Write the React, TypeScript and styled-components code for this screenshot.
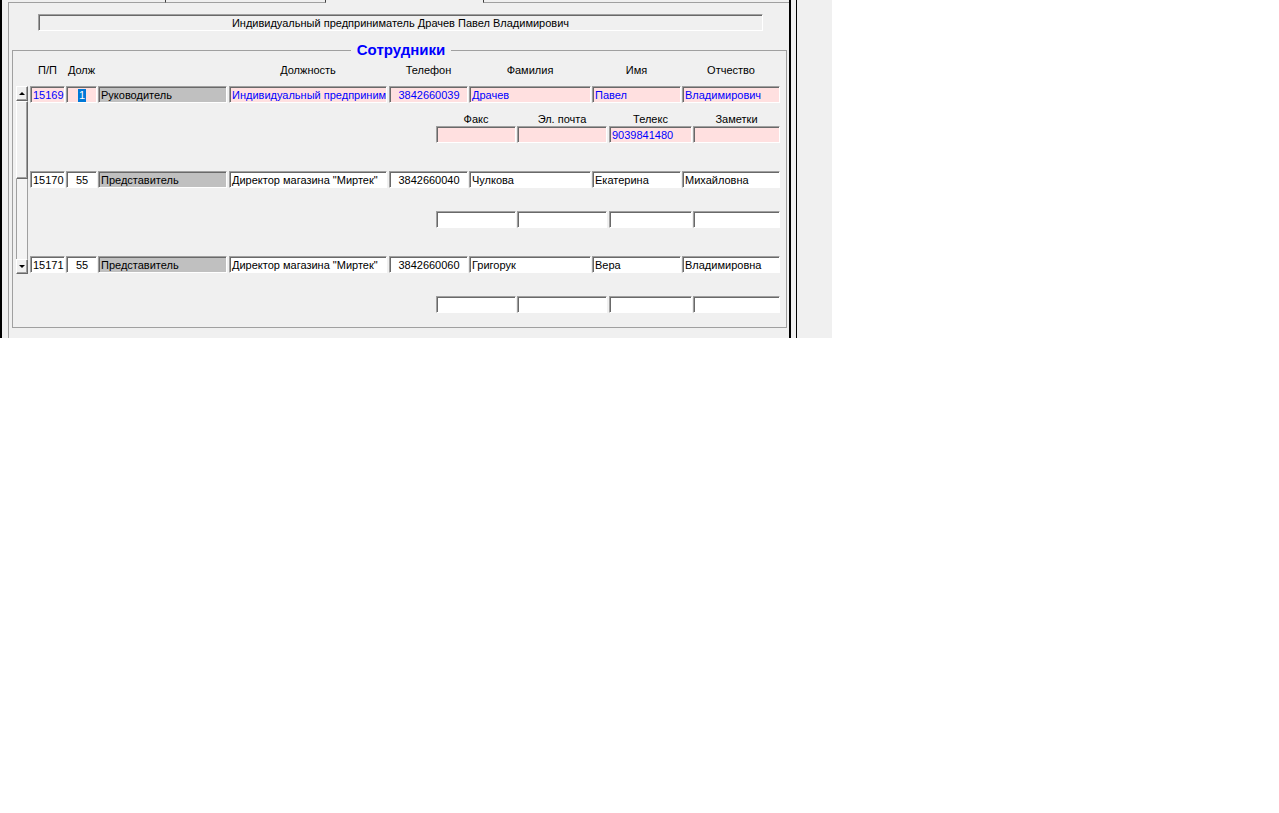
import styled, { createGlobalStyle, css } from "styled-components";

const GlobalStyle = createGlobalStyle`
	html, body {
		margin: 0;
		padding: 0;
		background: #ffffff;
	}
	body {
		font-family: "Liberation Sans", Arial, sans-serif;
		font-size: 11px;
		color: #000;
	}
`;

const sunken = css`
	border: 1px solid;
	border-color: #a0a0a0 #ffffff #ffffff #a0a0a0;
	box-shadow: inset 1px 1px 0 #696969;
`;

const raised = css`
	border: 1px solid;
	border-color: #ffffff #696969 #696969 #ffffff;
	box-shadow: inset -1px -1px 0 #a0a0a0;
`;

const Window = styled.div`
	display: flex;
	width: 832px;
	height: 338px;
	box-sizing: border-box;
	background: #f0f0f0;
	border-left: 2px solid #000;
`;

const TabControl = styled.div`
	display: flex;
	flex-direction: column;
	width: 789px;
	box-sizing: border-box;
	padding-left: 6px;
	border-right: 2px solid #000;
`;

const TabStrip = styled.div`
	display: flex;
	height: 3px;
`;

interface TabProps {
	$w?: number;
	$selected?: boolean;
	$edge?: "left" | "right";
}

const Tab = styled.div<TabProps>`
	box-sizing: border-box;
	height: 3px;
	${(p) => (p.$w ? `width: ${p.$w}px;` : "flex: 1;")}
	border-bottom: ${(p) => (p.$selected ? "none" : "1px solid #a0a0a0")};
	${(p) => p.$edge === "right" && "border-right: 1px solid #404040;"}
	${(p) => p.$edge === "left" && "border-left: 1px solid #404040;"}
`;

const TabPage = styled.div`
	flex: 1;
	display: flex;
	flex-direction: column;
	border-left: 1px solid #a0a0a0;
`;

const CompanyField = styled.div`
	${sunken};
	box-sizing: border-box;
	width: 725px;
	height: 17px;
	margin: 11px 0 0 29px;
	padding-top: 1px;
	display: flex;
	align-items: center;
	justify-content: center;
	line-height: 13px;
	white-space: nowrap;
`;

const Group = styled.fieldset`
	box-sizing: border-box;
	width: 775px;
	min-inline-size: 0;
	margin: 10px 0 0 3px;
	padding: 4px 0 14px 3px;
	border: 1px solid #a0a0a0;
`;

const GroupTitle = styled.legend`
	margin: 0 auto;
	padding: 0 6px;
	font-size: 15px;
	font-weight: bold;
	line-height: 18px;
	color: #0000ff;
`;

const HeaderRow = styled.div`
	display: flex;
	height: 14px;
	margin: 0 0 9px 14px;
`;

interface ColumnProps {
	$w: number;
	$gap: number;
}

const HeaderLabel = styled.div<ColumnProps>`
	width: ${(p) => p.$w}px;
	margin-right: ${(p) => p.$gap}px;
	text-align: center;
	line-height: 14px;
	white-space: nowrap;
`;

const Body = styled.div`
	display: flex;
	align-items: flex-start;
`;

const ScrollBar = styled.div`
	display: flex;
	flex-direction: column;
	width: 12px;
	height: 188px;
	margin-right: 2px;
`;

const ArrowButton = styled.div`
	${raised};
	box-sizing: border-box;
	height: 15px;
	display: flex;
	align-items: center;
	justify-content: center;
	background: #f0f0f0;
`;

const Arrow = styled.span<{ $down?: boolean }>`
	width: 0;
	height: 0;
	border-left: 3px solid transparent;
	border-right: 3px solid transparent;
	${(p) =>
		p.$down ? "border-top: 3px solid #000;" : "border-bottom: 3px solid #000;"}
`;

const Thumb = styled.div`
	${raised};
	box-sizing: border-box;
	height: 78px;
	background: #f0f0f0;
`;

const Track = styled.div`
	flex: 1;
	border-left: 1px solid #a0a0a0;
	border-right: 1px solid #a0a0a0;
	background: #f4f4f4;
`;

const RecordList = styled.div`
	display: flex;
	flex-direction: column;
	gap: 28px;
`;

const Record = styled.div`
	display: flex;
	flex-direction: column;
`;

const Row = styled.div<{ $indent?: number }>`
	display: flex;
	margin-left: ${(p) => p.$indent || 0}px;
`;

const SubLabels = styled.div`
	display: flex;
	height: 13px;
	margin: 10px 0 0 406px;
`;

const SubLabel = styled.div<ColumnProps>`
	width: ${(p) => p.$w}px;
	margin-right: ${(p) => p.$gap}px;
	text-align: center;
	line-height: 13px;
	white-space: nowrap;
`;

interface FieldProps extends ColumnProps {
	$bg: string;
	$color: string;
	$align: string;
}

const Field = styled.div<FieldProps>`
	${sunken};
	box-sizing: border-box;
	width: ${(p) => p.$w}px;
	height: 17px;
	margin-right: ${(p) => p.$gap}px;
	padding: 1px 1px 0 2px;
	display: flex;
	align-items: center;
	justify-content: ${(p) => p.$align};
	background: ${(p) => p.$bg};
	color: ${(p) => p.$color};
	line-height: 13px;
	white-space: nowrap;
	overflow: hidden;
`;

const Selected = styled.span`
	background: #0078d7;
	color: #ffffff;
	padding: 0 1px;
`;

const mainColumns = [
	{ w: 35, gap: 1, align: "flex-start", label: "П/П" },
	{ w: 31, gap: 1, align: "center", label: "Долж" },
	{ w: 129, gap: 2, align: "flex-start", label: "" },
	{ w: 158, gap: 2, align: "flex-start", label: "Должность" },
	{ w: 79, gap: 1, align: "center", label: "Телефон" },
	{ w: 122, gap: 1, align: "flex-start", label: "Фамилия" },
	{ w: 89, gap: 1, align: "flex-start", label: "Имя" },
	{ w: 98, gap: 0, align: "flex-start", label: "Отчество" },
];

const subColumns = [
	{ w: 80, gap: 1, label: "Факс" },
	{ w: 90, gap: 2, label: "Эл. почта" },
	{ w: 83, gap: 1, label: "Телекс" },
	{ w: 87, gap: 0, label: "Заметки" },
];

interface Employee {
	id: string;
	post: string;
	role: string;
	title: string;
	phone: string;
	last: string;
	first: string;
	middle: string;
	extra: string[];
	current?: boolean;
}

const employees: Employee[] = [
	{
		id: "15169",
		post: "1",
		role: "Руководитель",
		title: "Индивидуальный предприниматель",
		phone: "3842660039",
		last: "Драчев",
		first: "Павел",
		middle: "Владимирович",
		extra: ["", "", "9039841480", ""],
		current: true,
	},
	{
		id: "15170",
		post: "55",
		role: "Представитель",
		title: 'Директор магазина "Миртек"',
		phone: "3842660040",
		last: "Чулкова",
		first: "Екатерина",
		middle: "Михайловна",
		extra: ["", "", "", ""],
	},
	{
		id: "15171",
		post: "55",
		role: "Представитель",
		title: 'Директор магазина "Миртек"',
		phone: "3842660060",
		last: "Григорук",
		first: "Вера",
		middle: "Владимировна",
		extra: ["", "", "", ""],
	},
];

const PINK = "#ffe0e0";
const BLUE = "#0000ff";

function EmployeeRecord({ emp }: { emp: Employee }) {
	const values = [
		emp.id,
		emp.post,
		emp.role,
		emp.title,
		emp.phone,
		emp.last,
		emp.first,
		emp.middle,
	];
	const bg = emp.current ? PINK : "#ffffff";
	const color = emp.current ? BLUE : "#000000";

	return (
		<Record>
			<Row>
				{mainColumns.map((col, i) => (
					<Field
						key={i}
						$w={col.w}
						$gap={col.gap}
						$align={col.align}
						$bg={i === 2 ? "#c0c0c0" : bg}
						$color={i === 2 ? "#000000" : color}
					>
						{i === 1 && emp.current ? (
							<Selected>{values[i]}</Selected>
						) : (
							values[i]
						)}
					</Field>
				))}
			</Row>
			<SubLabels>
				{emp.current &&
					subColumns.map((col) => (
						<SubLabel key={col.label} $w={col.w} $gap={col.gap}>
							{col.label}
						</SubLabel>
					))}
			</SubLabels>
			<Row $indent={406}>
				{subColumns.map((col, i) => (
					<Field
						key={col.label}
						$w={col.w}
						$gap={col.gap}
						$align="flex-start"
						$bg={bg}
						$color={color}
					>
						{emp.extra[i]}
					</Field>
				))}
			</Row>
		</Record>
	);
}

const RightFrame = styled.div`
	flex: 1;
	margin-left: 5px;
	border-left: 1px solid #000;
`;

function App() {
	return (
		<>
			<GlobalStyle />
			<Window>
				<TabControl>
					<TabStrip>
						<Tab $w={158} $edge="right" />
						<Tab $w={160} $edge="right" />
						<Tab $w={157} $selected />
						<Tab $edge="left" />
					</TabStrip>
					<TabPage>
						<CompanyField>
							Индивидуальный предприниматель Драчев Павел Владимирович
						</CompanyField>
						<Group>
							<GroupTitle>Сотрудники</GroupTitle>
							<HeaderRow>
								{mainColumns.map((col, i) => (
									<HeaderLabel key={i} $w={col.w} $gap={col.gap}>
										{col.label}
									</HeaderLabel>
								))}
							</HeaderRow>
							<Body>
								<ScrollBar>
									<ArrowButton>
										<Arrow />
									</ArrowButton>
									<Thumb />
									<Track />
									<ArrowButton>
										<Arrow $down />
									</ArrowButton>
								</ScrollBar>
								<RecordList>
									{employees.map((emp) => (
										<EmployeeRecord key={emp.id} emp={emp} />
									))}
								</RecordList>
							</Body>
						</Group>
					</TabPage>
				</TabControl>
				<RightFrame />
			</Window>
		</>
	);
}

export default App;
